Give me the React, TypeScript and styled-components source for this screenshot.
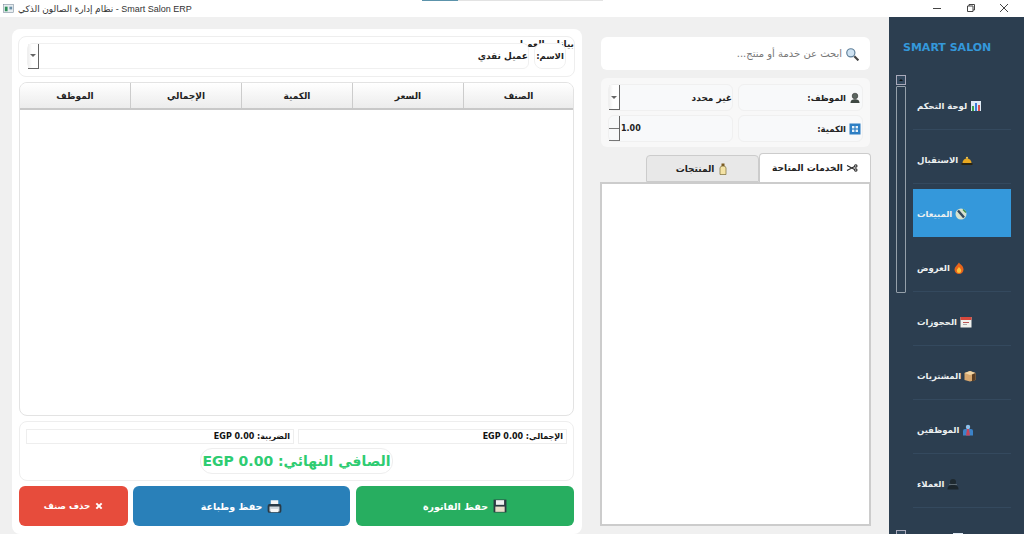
import React from 'react';
import styled, { createGlobalStyle } from 'styled-components';

const GlobalStyle = createGlobalStyle`
  html, body {
    margin: 0;
    padding: 0;
    width: 1024px;
    height: 534px;
    overflow: hidden;
    background: #f0f0f0;
    font-family: "DejaVu Sans", "Noto Sans", sans-serif;
  }
  * { box-sizing: border-box; }
`;

const Window = styled.div`
  width: 1024px;
  height: 534px;
  display: flex;
  flex-direction: column;
  overflow: hidden;
`;

const TitleBar = styled.div`
  height: 17px;
  flex: none;
  background: #fff;
  display: flex;
  align-items: center;
  padding: 0 3px;
  position: relative;
`;

const TitleText = styled.span`
  font-family: "Liberation Sans", "DejaVu Sans", sans-serif;
  font-size: 9px;
  color: #333;
  margin-left: 4px;
  white-space: nowrap;
`;

const Progress = styled.div<{ $left: number; $width: number; $color: string }>`
  position: absolute;
  top: 0;
  left: ${(p) => p.$left}px;
  width: ${(p) => p.$width}px;
  height: 1px;
  background: ${(p) => p.$color};
`;

const WindowButtons = styled.div`
  margin-left: auto;
  display: flex;
  align-items: center;
`;

const WindowButton = styled.div`
  width: 33.5px;
  height: 17px;
  padding-bottom: 2px;
  display: flex;
  align-items: center;
  justify-content: center;
  color: #444;
`;

const Body = styled.div`
  flex: 1;
  min-height: 0;
  display: flex;
`;

const InvoiceCard = styled.div`
  width: 570px;
  height: 505px;
  margin: 12px 0 0 12px;
  padding: 7px 7px 0 6px;
  background: #fff;
  border-radius: 8px;
  display: flex;
  flex-direction: column;
  flex: none;
`;

const CustomerGroup = styled.div`
  height: 41px;
  position: relative;
  border: 1px solid #eee;
  border-radius: 8px;
  padding: 6px 8px 0 8px;
  overflow: hidden;
`;

const GroupTitle = styled.span`
  position: absolute;
  top: 2px;
  right: 0;
  font-size: 9px;
  font-weight: bold;
  color: #222;
`;

const CustomerRow = styled.div`
  position: relative;
  display: flex;
  gap: 5px;
  height: 26px;
`;

const ComboBox = styled.div`
  flex: 1;
  height: 26px;
  background: #fff;
  border: 1px solid #f0f0f0;
  border-radius: 6px;
  display: flex;
  align-items: center;
  font-size: 9px;
  font-weight: bold;
  color: #222;
`;

const ComboValue = styled.span`
  flex: 1;
  text-align: right;
`;

const ComboArrow = styled.div`
  width: 11px;
  height: 25px;
  flex: none;
  background: linear-gradient(90deg, #eee, #fff 40%);
  border-right: 1px solid #666;
  border-bottom: 1px solid #666;
  display: flex;
  align-items: center;
  justify-content: center;
  &::after {
    content: '';
    border-left: 3px solid transparent;
    border-right: 3px solid transparent;
    border-top: 3px solid #666;
  }
`;

const NameLabel = styled.div`
  width: 32px;
  height: 26px;
  flex: none;
  background: #fff;
  border: 1px solid #f0f0f0;
  border-radius: 8px;
  display: flex;
  align-items: center;
  justify-content: center;
  font-size: 8.5px;
  font-weight: bold;
  color: #222;
`;

const Table = styled.div`
  height: 334px;
  margin: 5px 1px 0 1px;
  border: 1px solid #e3e3e3;
  border-radius: 8px;
  overflow: hidden;
  flex: none;
  background: #fff;
`;

const TableHeader = styled.div`
  display: grid;
  grid-template-columns: 110px 111px 111px 111px 1fr;
  height: 27px;
  background: linear-gradient(#fff, #ececec);
  border-bottom: 2px solid #c8c8c8;
`;

const HeaderCell = styled.div`
  display: flex;
  align-items: center;
  justify-content: center;
  font-size: 9px;
  font-weight: bold;
  color: #222;
  & + & { border-left: 1px solid #ccc; }
`;

const TotalsBox = styled.div`
  height: 60px;
  margin: 5px 1px 0 1px;
  padding: 7px 6px 0 6px;
  border: 1px solid #eee;
  border-radius: 8px;
  display: flex;
  flex-direction: column;
  align-items: center;
  flex: none;
`;

const TotalsRow = styled.div`
  display: flex;
  gap: 4px;
  width: 100%;
`;

const TotalField = styled.div<{ $width: number }>`
  width: ${(p) => p.$width}px;
  height: 15px;
  border: 1px solid #eee;
  padding: 0 3px 0 0;
  display: flex;
  align-items: center;
  font-size: 8px;
  font-weight: bold;
  color: #111;
  white-space: nowrap;
`;

const GrandTotal = styled.div`
  margin-top: 4px;
  width: 193px;
  height: 26px;
  border: 1px solid #eee;
  border-radius: 12px;
  display: flex;
  align-items: center;
  justify-content: center;
  font-size: 14px;
  font-weight: bold;
  color: #2ecc71;
  white-space: nowrap;
`;

const Actions = styled.div`
  display: flex;
  gap: 5px;
  margin: 5px 1px 0 1px;
`;

const ActionButton = styled.div<{ $color: string; $width: number; $small?: boolean }>`
  width: ${(p) => p.$width}px;
  height: 40px;
  flex: none;
  background: ${(p) => p.$color};
  border-radius: 6px;
  color: #fff;
  font-size: ${(p) => (p.$small ? 8.7 : 9.5)}px;
  font-weight: bold;
  display: flex;
  align-items: center;
  justify-content: center;
  gap: 5px;
`;

const SaveButton = styled(ActionButton)`
  margin-left: 1px;
`;

const RightColumn = styled.div`
  width: 271px;
  flex: none;
  margin: 20px 0 0 18px;
  display: flex;
  flex-direction: column;
`;

const SearchBox = styled.div`
  height: 33px;
  margin: 0 1px;
  background: #fff;
  border-radius: 6px;
  display: flex;
  align-items: center;
  gap: 3px;
  padding: 0 11px;
  font-size: 10px;
  color: #777;
`;

const FormCard = styled.div`
  height: 69px;
  margin: 8px 1px 0 1px;
  background: #f8f8f8;
  border-radius: 6px;
  padding: 6px 7px 0 7px;
  display: grid;
  grid-template-columns: 125px 125px;
  grid-auto-rows: 27px;
  column-gap: 5px;
  row-gap: 4px;
`;

const FormField = styled.div`
  background: #f8f9fa;
  border: 1px solid #f0f0f0;
  border-radius: 6px;
  display: flex;
  align-items: center;
  font-size: 9px;
  font-weight: bold;
  color: #222;
`;

const LabelField = styled(FormField)`
  gap: 3px;
  padding-right: 1px;
  font-size: 8.5px;
`;

const SpinButtons = styled.div`
  width: 11px;
  height: 25px;
  flex: none;
  border-right: 1px solid #666;
  border-bottom: 1px solid #777;
  display: flex;
  flex-direction: column;
  justify-content: center;
  &::before {
    content: '';
    display: block;
    height: 1px;
    background: #777;
  }
`;

const SpinValue = styled.span`
  margin-left: 1px;
  font-size: 8px;
  direction: ltr;
`;

const Tabs = styled.div`
  display: flex;
  justify-content: flex-end;
  align-items: flex-end;
  margin-top: 6px;
  height: 29px;
`;

const Tab = styled.div<{ $active?: boolean }>`
  width: ${(p) => (p.$active ? 112 : 113)}px;
  height: ${(p) => (p.$active ? 29 : 27)}px;
  background: ${(p) => (p.$active ? '#fff' : '#e8e8e8')};
  border: 1px solid #ccc;
  border-bottom: ${(p) => (p.$active ? 'none' : '1px solid #ccc')};
  border-radius: 4px 4px 0 0;
  display: flex;
  align-items: center;
  justify-content: center;
  gap: 3px;
  font-size: 9px;
  font-weight: bold;
  color: #222;
`;

const TabPane = styled.div`
  height: 344px;
  background: #fff;
  border: 2px solid #ccc;
`;

const Sidebar = styled.div`
  width: 135px;
  margin-left: 18px;
  flex: none;
  background: #2c3e50;
  display: flex;
  flex-direction: column;
  overflow: hidden;
`;

const Logo = styled.div`
  height: 58px;
  flex: none;
  padding: 2px 0 0 14px;
  display: flex;
  align-items: center;
  font-size: 11px;
  font-weight: bold;
  color: #3498db;
  white-space: nowrap;
`;

const SideScroll = styled.div`
  display: flex;
  gap: 7px;
  padding-left: 7px;
`;

const ScrollBar = styled.div`
  width: 10px;
  flex: none;
  display: flex;
  flex-direction: column;
  gap: 1px;
`;

const ScrollButton = styled.div<{ $offset?: number }>`
  height: 10px;
  flex: none;
  border: 1px solid #aab;
  margin-top: ${(p) => p.$offset ?? 0}px;
  background: #34495e;
  display: flex;
  align-items: center;
  justify-content: center;
  &::after {
    content: '';
    border-left: 2px solid transparent;
    border-right: 2px solid transparent;
    border-bottom: 2px solid #111;
  }
`;

const ScrollThumb = styled.div`
  height: 207px;
  flex: none;
  border: 1px solid #95a0aa;
  border-radius: 1px;
`;

const NavList = styled.div`
  width: 98px;
  flex: none;
  padding-top: 1px;
`;

const NavItem = styled.div<{ $active?: boolean }>`
  height: 49px;
  margin-top: 5px;
  padding: 1px 0 0 4px;
  background: ${(p) => (p.$active ? '#3498db' : 'transparent')};
  border-bottom: 1px solid ${(p) => (p.$active ? '#2c3e50' : '#34495e')};
  display: flex;
  align-items: center;
  justify-content: flex-end;
  gap: 3px;
  font-size: 8.5px;
  font-weight: bold;
  color: #ecf0f1;
  white-space: nowrap;
`;

type IconName =
  | 'chart' | 'bell' | 'tag' | 'fire' | 'calendar' | 'box' | 'staff' | 'clients'
  | 'search' | 'bust' | 'keypad' | 'scissors' | 'bottle' | 'disk' | 'printer' | 'cross' | 'app';

const paths: Record<IconName, React.ReactNode> = {
  chart: (<>
    <rect x="1" y="1" width="10" height="10" fill="#dfeaf5" />
    <rect x="2" y="6" width="2" height="5" fill="#3fa34d" />
    <rect x="5" y="3" width="2" height="8" fill="#3b7dd8" />
    <rect x="8" y="5" width="2" height="6" fill="#d9534f" />
  </>),
  bell: (<>
    <path d="M1.5 9a4.5 4.5 0 0 1 9 0z" fill="#e8a820" />
    <circle cx="6" cy="3.8" r="1.1" fill="#f3c64c" />
    <rect x="0.5" y="9" width="11" height="2" fill="#2a2412" />
  </>),
  tag: (<>
    <circle cx="6" cy="6" r="5.5" fill="#d7e3cf" />
    <path d="M3 2.5l6 7" stroke="#34495e" strokeWidth="2.4" />
    <path d="M8 1.5l3 3" stroke="#3c8f50" strokeWidth="1.5" />
  </>),
  fire: (<>
    <path d="M6 .5c1 2 4.5 3 4.5 7a4.5 4.5 0 0 1-9 0C1.5 5 4 3.5 6 .5z" fill="#e8641b" />
    <path d="M6 5c.6 1 2.2 2 2.2 3.7a2.2 2.2 0 0 1-4.4 0C3.8 7 5.4 6.2 6 5z" fill="#f9c23c" />
  </>),
  calendar: (<>
    <rect x="0.5" y="1" width="11" height="10.5" fill="#f1f1ee" />
    <rect x="0.5" y="1" width="11" height="3" fill="#d8483c" />
    <rect x="3" y="6" width="6" height="1" fill="#b55" />
    <rect x="3" y="8" width="4" height="1" fill="#aaa" />
  </>),
  box: (<>
    <path d="M.5 3L6 1l5.5 2v7L6 11.5.5 10z" fill="#d8a86f" />
    <path d="M.5 3L6 5l5.5-2L6 1z" fill="#f0d4a4" />
    <path d="M8 4.5v7l3.5-1.5V3z" fill="#5a3d22" />
  </>),
  staff: (<>
    <circle cx="6" cy="3" r="2.2" fill="#8fc0ea" />
    <path d="M1 11.5V7a2 2 0 0 1 2-2h6a2 2 0 0 1 2 2v4.500z" fill="#3c83c9" />
    <path d="M5 5h2l1 6.5H4z" fill="#c8455a" />
  </>),
  clients: (<>
    <circle cx="6" cy="4" r="3" fill="#1f2a30" />
    <path d="M.5 11.5c0-3.5 2-4.5 5.5-4.5s5.5 1 5.500 4.500z" fill="#1c262c" />
    <rect x="2" y="6" width="8" height="1" fill="#5d6a72" />
  </>),
  search: (<>
    <circle cx="5" cy="5" r="3.5" fill="#cfe3f3" stroke="#5f7f99" />
    <path d="M8 8l3.5 3.5" stroke="#444" strokeWidth="1.8" />
  </>),
  bust: (<>
    <circle cx="6" cy="4" r="2.8" fill="#5b6660" stroke="#333" strokeWidth=".6" />
    <path d="M1.5 11c0-3 2-3.8 4.5-3.8s4.5.8 4.5 3.8z" fill="#3e4843" />
  </>),
  keypad: (<>
    <rect x="0.5" y="0.5" width="11" height="11" fill="#2d7fc4" />
    <rect x="3" y="3" width="2.4" height="2.4" fill="#e8f2fa" />
    <rect x="6.6" y="3" width="2.4" height="2.4" fill="#e8f2fa" />
    <rect x="3" y="6.6" width="2.4" height="2.4" fill="#e8f2fa" />
    <rect x="6.6" y="6.6" width="2.4" height="2.4" fill="#e8f2fa" />
  </>),
  scissors: (<>
    <circle cx="9.8" cy="4" r="1.2" fill="none" stroke="#222" strokeWidth="1.1" />
    <circle cx="9.8" cy="8" r="1.2" fill="none" stroke="#222" strokeWidth="1.1" />
    <path d="M8.6 4.6L1 8.5M8.6 7.4L1 3.5" stroke="#222" strokeWidth="1.1" />
  </>),
  bottle: (<>
    <rect x="4.5" y="0.5" width="3" height="2.5" fill="#7a5a20" />
    <path d="M3 5a3 2 0 0 1 6 0v6.5H3z" fill="#f4e3a6" stroke="#7a6a35" strokeWidth=".7" />
  </>),
  disk: (<>
    <rect x="0.5" y="0.5" width="11" height="11" fill="#2d3a40" />
    <rect x="2.5" y="1" width="7" height="4" fill="#f0f0f0" />
    <rect x="2" y="6.5" width="8" height="4.5" fill="#e9dfc9" />
  </>),
  printer: (<>
    <rect x="3" y="1" width="6" height="4" fill="#f4f4f4" />
    <rect x="0.5" y="4" width="11" height="7" rx="1.5" fill="#2a3a46" />
    <rect x="2" y="6" width="8" height="4" fill="#cfd6db" />
    <rect x="3" y="8" width="6" height="2.5" fill="#f7f7f7" />
  </>),
  cross: (<path d="M2 2l8 8M10 2l-8 8" stroke="#fff" strokeWidth="3" />),
  app: (<>
    <rect x="0.5" y="1.5" width="11" height="9" fill="#e7edf0" stroke="#789" strokeWidth=".6" />
    <rect x="2" y="4" width="3" height="5" fill="#2f8f5a" />
    <rect x="7" y="4" width="3" height="3" fill="#6a8fa8" />
  </>),
};

const EmojiSvg = styled.svg<{ $size: number }>`
  width: ${(p) => p.$size}px;
  height: ${(p) => p.$size}px;
  flex: none;
`;

const Icon = ({ name, size = 12 }: { name: IconName; size?: number }) => (
  <EmojiSvg $size={size} viewBox="0 0 12 12">{paths[name]}</EmojiSvg>
);

const navItems: { label: string; icon: IconName; active?: boolean }[] = [
  { label: 'لوحة التحكم', icon: 'chart' },
  { label: 'الاستقبال', icon: 'bell' },
  { label: 'المبيعات', icon: 'tag', active: true },
  { label: 'العروض', icon: 'fire' },
  { label: 'الحجوزات', icon: 'calendar' },
  { label: 'المشتريات', icon: 'box' },
  { label: 'الموظفين', icon: 'staff' },
  { label: 'العملاء', icon: 'clients' },
  { label: 'التقارير', icon: 'chart' },
];

const columns = ['الموظف', 'الإجمالي', 'الكمية', 'السعر', 'الصنف'];

export default function App() {
  return (
    <Window>
      <GlobalStyle />
      <TitleBar>
        <Icon name="app" size={11} />
        <TitleText dir="rtl">Smart Salon ERP - نظام إدارة الصالون الذكي</TitleText>
        <Progress $left={422} $width={36} $color="#5c93ab" />
        <Progress $left={458} $width={145} $color="#e3e3e3" />
        <WindowButtons>
          <WindowButton>
            <svg width="10" height="10" viewBox="0 0 10 10"><path d="M1 5.5h8" stroke="currentColor" /></svg>
          </WindowButton>
          <WindowButton>
            <svg width="10" height="10" viewBox="0 0 10 10" fill="none"><path d="M1.5 3h5.5v5.5H1.5zM3 3V1.5h5.5V7H7" stroke="currentColor" /></svg>
          </WindowButton>
          <WindowButton>
            <svg width="10" height="10" viewBox="0 0 10 10"><path d="M1 1l8 8M9 1l-8 8" stroke="currentColor" /></svg>
          </WindowButton>
        </WindowButtons>
      </TitleBar>
      <Body>
        <InvoiceCard>
          <CustomerGroup>
            <GroupTitle dir="rtl">بيانات العميل</GroupTitle>
            <CustomerRow>
              <ComboBox>
                <ComboArrow />
                <ComboValue dir="rtl">عميل نقدي</ComboValue>
              </ComboBox>
              <NameLabel dir="rtl">الاسم:</NameLabel>
            </CustomerRow>
          </CustomerGroup>
          <Table>
            <TableHeader>
              {columns.map((c) => (
                <HeaderCell key={c} dir="rtl">{c}</HeaderCell>
              ))}
            </TableHeader>
          </Table>
          <TotalsBox>
            <TotalsRow>
              <TotalField $width={268} dir="rtl">الضريبة: EGP 0.00</TotalField>
              <TotalField $width={269} dir="rtl">الإجمالي: EGP 0.00</TotalField>
            </TotalsRow>
            <GrandTotal dir="rtl">الصافي النهائي: EGP 0.00</GrandTotal>
          </TotalsBox>
          <Actions>
            <ActionButton $color="#e74c3c" $width={109} $small dir="rtl">
              <Icon name="cross" size={8} />حذف صنف
            </ActionButton>
            <ActionButton $color="#2980b9" $width={217} dir="rtl">
              <Icon name="printer" size={15} />حفظ وطباعة
            </ActionButton>
            <SaveButton $color="#27ae60" $width={218} dir="rtl">
              <Icon name="disk" size={14} />حفظ الفاتورة
            </SaveButton>
          </Actions>
        </InvoiceCard>

        <RightColumn>
          <SearchBox dir="rtl">
            <Icon name="search" size={14} />
            ابحث عن خدمة أو منتج...
          </SearchBox>
          <FormCard>
            <FormField>
              <ComboArrow />
              <ComboValue dir="rtl">غير محدد</ComboValue>
            </FormField>
            <LabelField dir="rtl">
              <Icon name="bust" />الموظف:
            </LabelField>
            <FormField>
              <SpinButtons />
              <SpinValue>1.00</SpinValue>
            </FormField>
            <LabelField dir="rtl">
              <Icon name="keypad" />الكمية:
            </LabelField>
          </FormCard>
          <Tabs>
            <Tab dir="rtl"><Icon name="bottle" />المنتجات</Tab>
            <Tab $active dir="rtl"><Icon name="scissors" />الخدمات المتاحة</Tab>
          </Tabs>
          <TabPane />
        </RightColumn>

        <Sidebar>
          <Logo>SMART SALON</Logo>
          <SideScroll>
            <ScrollBar>
              <ScrollButton />
              <ScrollThumb />
              <ScrollButton $offset={236} />
            </ScrollBar>
            <NavList>
              {navItems.map((item) => (
                <NavItem key={item.label} $active={item.active} dir="rtl">
                  <Icon name={item.icon} />
                  {item.label}
                </NavItem>
              ))}
            </NavList>
          </SideScroll>
        </Sidebar>
      </Body>
    </Window>
  );
}
